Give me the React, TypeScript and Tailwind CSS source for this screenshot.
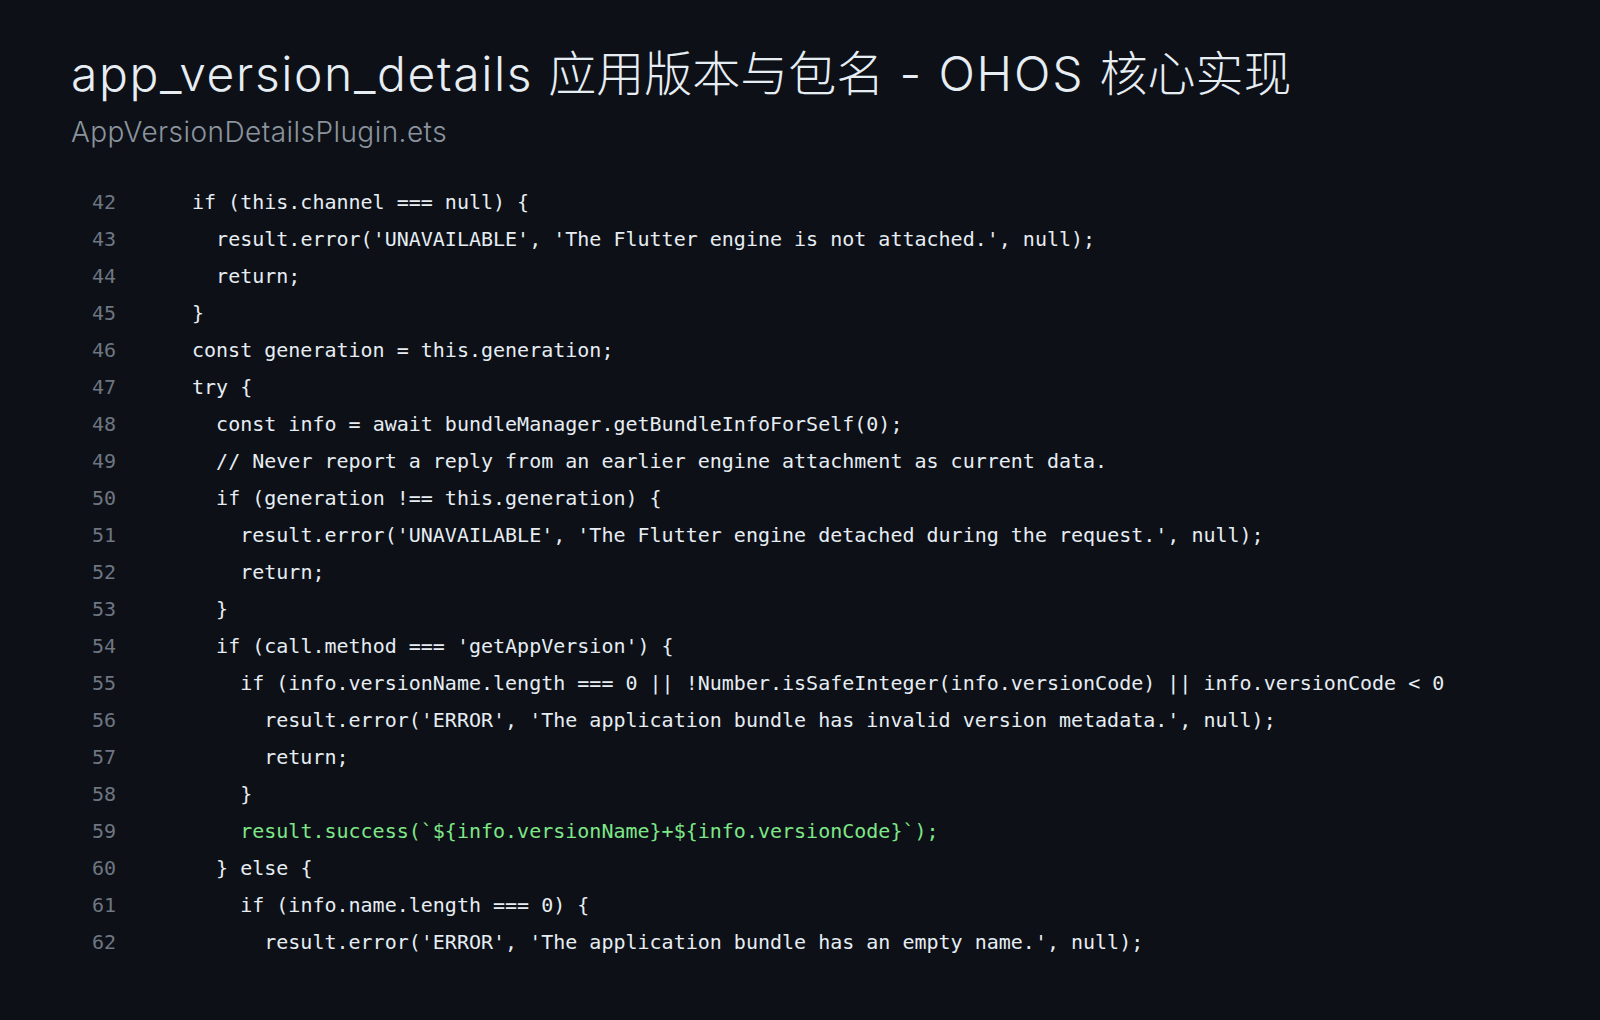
const lines: { n: number; indent: number; text: string; green?: boolean }[] = [
  { n: 42, indent: 0, text: "if (this.channel === null) {" },
  { n: 43, indent: 1, text: "result.error('UNAVAILABLE', 'The Flutter engine is not attached.', null);" },
  { n: 44, indent: 1, text: "return;" },
  { n: 45, indent: 0, text: "}" },
  { n: 46, indent: 0, text: "const generation = this.generation;" },
  { n: 47, indent: 0, text: "try {" },
  { n: 48, indent: 1, text: "const info = await bundleManager.getBundleInfoForSelf(0);" },
  { n: 49, indent: 1, text: "// Never report a reply from an earlier engine attachment as current data." },
  { n: 50, indent: 1, text: "if (generation !== this.generation) {" },
  { n: 51, indent: 2, text: "result.error('UNAVAILABLE', 'The Flutter engine detached during the request.', null);" },
  { n: 52, indent: 2, text: "return;" },
  { n: 53, indent: 1, text: "}" },
  { n: 54, indent: 1, text: "if (call.method === 'getAppVersion') {" },
  { n: 55, indent: 2, text: "if (info.versionName.length === 0 || !Number.isSafeInteger(info.versionCode) || info.versionCode < 0" },
  { n: 56, indent: 3, text: "result.error('ERROR', 'The application bundle has invalid version metadata.', null);" },
  { n: 57, indent: 3, text: "return;" },
  { n: 58, indent: 2, text: "}" },
  { n: 59, indent: 2, text: "result.success(`${info.versionName}+${info.versionCode}`);", green: true },
  { n: 60, indent: 1, text: "} else {" },
  { n: 61, indent: 2, text: "if (info.name.length === 0) {" },
  { n: 62, indent: 3, text: "result.error('ERROR', 'The application bundle has an empty name.', null);" },
];

export default function App() {
  return (
    <div className="h-[1020px] w-[1600px] overflow-hidden bg-[#0d1017] px-[71px] pt-[42px]">
      <h1 className="font-['Inter','Noto_Sans_CJK_SC',sans-serif] text-[48px] leading-[64px] font-light text-[#e6edf3]">
        <span className="tracking-[1.6px]">app_version_details </span>
        应用版本与包名
        <span className="tracking-[1.8px]"> - OHOS </span>
        核心实现
      </h1>
      <p className="mt-[6px] font-['Inter','Noto_Sans_CJK_SC',sans-serif] text-[28px] leading-[40px] font-light tracking-[0.45px] text-[#8b949e]">
        AppVersionDetailsPlugin.ets
      </p>
      <div className="mt-[32px] font-['DejaVu_Sans_Mono',monospace] text-[20px] leading-[37px] whitespace-pre">
        {lines.map((l) => (
          <div key={l.n} className="flex">
            <span className="w-[121px] shrink-0 pl-[21px] text-[#6e7681]">{l.n}</span>
            <span className={l.green ? "text-[#7ee787]" : "text-[#e6edf3]"}>
              {"  ".repeat(l.indent)}
              {l.text}
            </span>
          </div>
        ))}
      </div>
    </div>
  );
}
